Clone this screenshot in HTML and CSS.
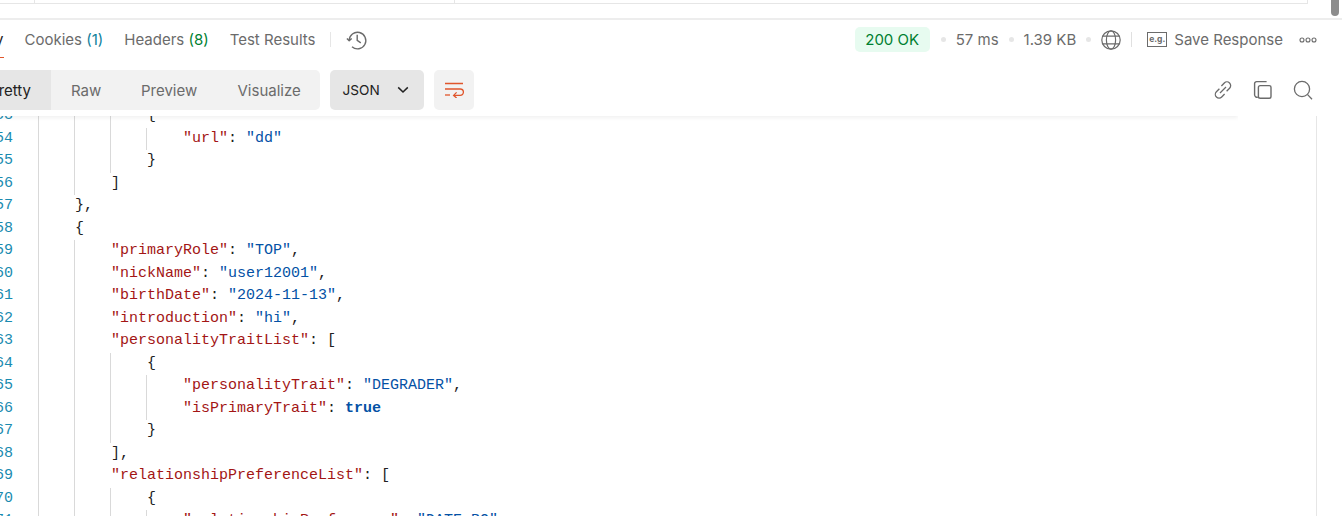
FILE: index.html
```html
<!DOCTYPE html>
<html lang="en">
<head>
<meta charset="utf-8">
<title>Response</title>
<link rel="stylesheet" href="styles.css">
</head>
<body>
<div class="app">
  <div class="scroll-thumb"></div>
  <div class="top-strip"><div class="top-table"><i class="c1"></i><i class="c2"></i><i class="c3"></i></div></div>
  <header class="panel">
    <div class="tabs-row">
      <nav class="tabs">
        <span class="tab active">Body</span>
        <span class="tab">Cookies <b class="teal">(1)</b></span>
        <span class="tab">Headers <b class="green">(8)</b></span>
        <span class="tab">Test Results</span>
        <span class="vsep"></span>
        <svg class="ico hist" viewBox="0 0 22 22" fill="none" stroke="#6b6b6b" stroke-width="1.4"><path d="M3.2 11.5A8.3 8.3 0 1 1 6 17.8"/><path d="M.9 9.4l2.3 2.4 2.5-2.3" stroke-linejoin="round"/><path d="M11.2 5.8v5.6l3.6 2.4"/></svg>
      </nav>
      <div class="meta">
        <span class="status">200 OK</span>
        <span class="dot"></span><span class="stat">57 ms</span>
        <span class="dot"></span><span class="stat">1.39 KB</span>
        <span class="dot"></span>
        <svg class="ico globe" viewBox="0 0 20 20" fill="none" stroke="#6b6b6b" stroke-width="1.2"><circle cx="10" cy="10" r="9.2"/><ellipse cx="10" cy="10" rx="4.6" ry="9.2"/><path d="M1.6 6.2h16.8M1.6 13.8h16.8"/></svg>
        <span class="vsep2"></span>
        <span class="eg">e.g.</span>
        <span class="save">Save Response</span>
        <svg class="ico more" viewBox="0 0 18 6" fill="none" stroke="#6b6b6b" stroke-width="1.1"><circle cx="3" cy="3" r="2"/><circle cx="9" cy="3" r="2"/><circle cx="15" cy="3" r="2"/></svg>
      </div>
    </div>
    <div class="tools-row">
      <div class="seg">
        <span class="seg-item on">Pretty</span>
        <span class="seg-item raw">Raw</span>
        <span class="seg-item prev">Preview</span>
        <span class="seg-item vis">Visualize</span>
      </div>
      <div class="lang">JSON <svg class="chev" viewBox="0 0 12 8" fill="none" stroke="#212121" stroke-width="1.5"><path d="M1.2 1.4L6 6l4.8-4.6"/></svg></div>
      <div class="wrapbtn"><svg viewBox="0 0 20 16" fill="none" stroke="#e0562c" stroke-width="1.3"><path d="M1 1.5h18M1 7h15.2a2.9 2.9 0 0 1 0 6.4H10"/><path d="M12.6 10.4l-3 3 3 2.6"/><path d="M1 13h5"/></svg></div>
      <div class="actions">
        <svg class="ico" viewBox="0 0 20 20" fill="none" stroke="#6b6b6b" stroke-width="1.3"><path d="M8.4 6l2.9-3a3.7 3.7 0 0 1 5.3 5.2l-3 3"/><path d="M11.6 14l-2.9 3a3.7 3.7 0 0 1-5.3-5.2l3-3"/><path d="M7 13l6-6"/></svg>
        <svg class="ico" viewBox="0 0 20 20" fill="none" stroke="#6b6b6b" stroke-width="1.4"><path d="M4.8 17.2A2.6 2.6 0 0 1 1.6 15V3.6a2 2 0 0 1 2-2h10"/><rect x="5.4" y="5.6" width="12.6" height="12.6" rx="1.8"/></svg>
        <svg class="ico" viewBox="0 0 20 20" fill="none" stroke="#6b6b6b" stroke-width="1.3"><circle cx="9" cy="9" r="7.6"/><path d="M14.6 14.6l4.4 4.6"/></svg>
      </div>
    </div>
  </header>
  <main class="code-wrap">
    <div class="code">
      <div class="ln"><span class="no">53</span><i class="g"></i><i class="g"></i><i class="g"></i><span class="p">{</span></div>
      <div class="ln"><span class="no">54</span><i class="g"></i><i class="g"></i><i class="g"></i><i class="g"></i><span class="k">"url"</span><span class="p">: </span><span class="s">"dd"</span></div>
      <div class="ln"><span class="no">55</span><i class="g"></i><i class="g"></i><i class="g"></i><span class="p">}</span></div>
      <div class="ln"><span class="no">56</span><i class="g"></i><i class="g"></i><span class="p">]</span></div>
      <div class="ln"><span class="no">57</span><i class="g"></i><span class="p">},</span></div>
      <div class="ln"><span class="no">58</span><i class="g"></i><span class="p">{</span></div>
      <div class="ln"><span class="no">59</span><i class="g"></i><i class="g"></i><span class="k">"primaryRole"</span><span class="p">: </span><span class="s">"TOP"</span><span class="p">,</span></div>
      <div class="ln"><span class="no">60</span><i class="g"></i><i class="g"></i><span class="k">"nickName"</span><span class="p">: </span><span class="s">"user12001"</span><span class="p">,</span></div>
      <div class="ln"><span class="no">61</span><i class="g"></i><i class="g"></i><span class="k">"birthDate"</span><span class="p">: </span><span class="s">"2024-11-13"</span><span class="p">,</span></div>
      <div class="ln"><span class="no">62</span><i class="g"></i><i class="g"></i><span class="k">"introduction"</span><span class="p">: </span><span class="s">"hi"</span><span class="p">,</span></div>
      <div class="ln"><span class="no">63</span><i class="g"></i><i class="g"></i><span class="k">"personalityTraitList"</span><span class="p">: [</span></div>
      <div class="ln"><span class="no">64</span><i class="g"></i><i class="g"></i><i class="g"></i><span class="p">{</span></div>
      <div class="ln"><span class="no">65</span><i class="g"></i><i class="g"></i><i class="g"></i><i class="g"></i><span class="k">"personalityTrait"</span><span class="p">: </span><span class="s">"DEGRADER"</span><span class="p">,</span></div>
      <div class="ln"><span class="no">66</span><i class="g"></i><i class="g"></i><i class="g"></i><i class="g"></i><span class="k">"isPrimaryTrait"</span><span class="p">: </span><span class="b">true</span></div>
      <div class="ln"><span class="no">67</span><i class="g"></i><i class="g"></i><i class="g"></i><span class="p">}</span></div>
      <div class="ln"><span class="no">68</span><i class="g"></i><i class="g"></i><span class="p">],</span></div>
      <div class="ln"><span class="no">69</span><i class="g"></i><i class="g"></i><span class="k">"relationshipPreferenceList"</span><span class="p">: [</span></div>
      <div class="ln"><span class="no">70</span><i class="g"></i><i class="g"></i><i class="g"></i><span class="p">{</span></div>
      <div class="ln"><span class="no">71</span><i class="g"></i><i class="g"></i><i class="g"></i><i class="g"></i><span class="k">"relationshipPreference"</span><span class="p">: </span><span class="s">"DATE_BO"</span></div>
    </div>
  </main>
</div>
</body>
</html>
```

FILE: styles.css
```css
* { box-sizing: border-box; }
html, body { margin: 0; padding: 0; background: #fff; }
body { width: 1342px; height: 516px; overflow: hidden; font-family: Inter, "Liberation Sans", sans-serif; color: #6b6b6b; }
.app { position: relative; width: 1342px; height: 516px; overflow: hidden; display: flex; flex-direction: column; }
.scroll-thumb { position: absolute; left: 1331px; top: -6px; width: 8px; height: 22px; border-radius: 4px; background: #8c8c8c; z-index: 5; }
.top-strip { height: 20px; flex: none; border-bottom: 2px solid #ededed; }
.top-table { width: 1308px; height: 4px; border-bottom: 1px solid #e6e6e6; display: flex; position: relative; }
.top-table i { width: 1px; height: 3px; background: #e6e6e6; display: block; }
.c1 { margin-left: 34px; }
.c2 { margin-left: 419px; }
.c3 { margin-left: 852px; }

.panel { flex: none; height: 96px; background: #fff; position: relative; z-index: 3; }
.panel::before { content: ""; position: absolute; left: 0; top: 0; width: 1238px; height: 96px; box-shadow: 0 2px 4px rgba(0,0,0,.06); clip-path: inset(90px 0 -8px 0); pointer-events: none; }
.tabs-row { height: 39px; display: flex; justify-content: space-between; align-items: center; }
.tabs { display: flex; align-items: center; margin-left: -33px; height: 39px; }
.tab { font-size: 15px; position: relative; margin-right: 21px; white-space: nowrap; }
.tab b { font-weight: 400; }
.tab.active { color: #212121; }
.tab.active::after { content: ""; position: absolute; left: 0; right: 0; bottom: -9px; height: 1px; background: #e0562c; }
.teal { color: #0f7f9c; }
.green { color: #007f31; }
.vsep { width: 1px; height: 15px; background: #e6e6e6; margin: 0 15px 0 -6px; }
.ico { display: block; width: 20px; height: 20px; flex: none; }
.hist { width: 22px; height: 22px; }
.meta { display: flex; align-items: center; height: 39px; padding-right: 25px; font-size: 15px; }
.status { background: #e7fbf0; color: #007f31; width: 75px; height: 25px; border-radius: 5px; display: flex; align-items: center; justify-content: center; margin-right: 11px; }
.dot { width: 5px; height: 5px; border-radius: 50%; background: #e6e6e6; margin: 0 10px 0 0; }
.stat { margin-right: 10px; }
.vsep2 { width: 1px; height: 15px; background: #e0e0e0; margin: 0 15px 0 10px; }
.eg { width: 20px; height: 15px; border: 1px solid #6b6b6b; font-size: 8.5px; font-weight: 700; line-height: 12px; text-align: center; margin-right: 7px; }
.save { margin-right: 16px; }
.more { width: 18px; height: 6px; }

.tools-row { display: flex; align-items: center; margin-top: 11px; height: 40px; }
.seg { display: flex; height: 40px; margin-left: -49px; width: 369px; background: #f2f2f2; border-radius: 5px; font-size: 15px; overflow: hidden; margin-right: 10px; }
.seg-item { display: flex; align-items: center; white-space: nowrap; }
.seg-item.on { width: 100px; background: #e6e6e6; color: #212121; justify-content: flex-end; padding-right: 20px; border-radius: 5px 0 0 5px; }
.raw { margin-left: 20px; width: 70px; }
.prev { width: 96.5px; }
.lang { width: 94px; height: 40px; background: #e6e6e6; border-radius: 5px; display: flex; align-items: center; justify-content: space-between; padding: 0 15px 0 12.5px; color: #212121; font-size: 13.6px; margin-right: 10px; }
.chev { width: 12px; height: 8px; display: block; }
.wrapbtn { width: 40px; height: 40px; background: #f2f2f2; border-radius: 5px; display: flex; align-items: center; justify-content: center; }
.wrapbtn svg { width: 20px; height: 16px; display: block; }
.actions { margin-left: auto; display: flex; gap: 20px; padding-right: 29px; }

.code-wrap { flex: 1; min-height: 0; overflow: hidden; margin-right: 25px; border-right: 1px solid #e6e6e6; }
.code { margin-top: -11px; font-family: "Liberation Mono", "DejaVu Sans Mono", monospace; font-size: 15px; }
.ln { display: flex; height: 22.5px; line-height: 22.5px; white-space: pre; }
.no { width: 38px; flex: none; padding-right: 25px; color: #1a8bb0; display: flex; justify-content: flex-end; }
.g { display: block; width: 36px; flex: none; border-left: 1px solid #d9d9d9; }
.g:last-of-type { width: 37px; }
.k { color: #a31515; }
.s { color: #0451a5; }
.p { color: #212121; }
.b { color: #0451a5; font-weight: 700; }
```
